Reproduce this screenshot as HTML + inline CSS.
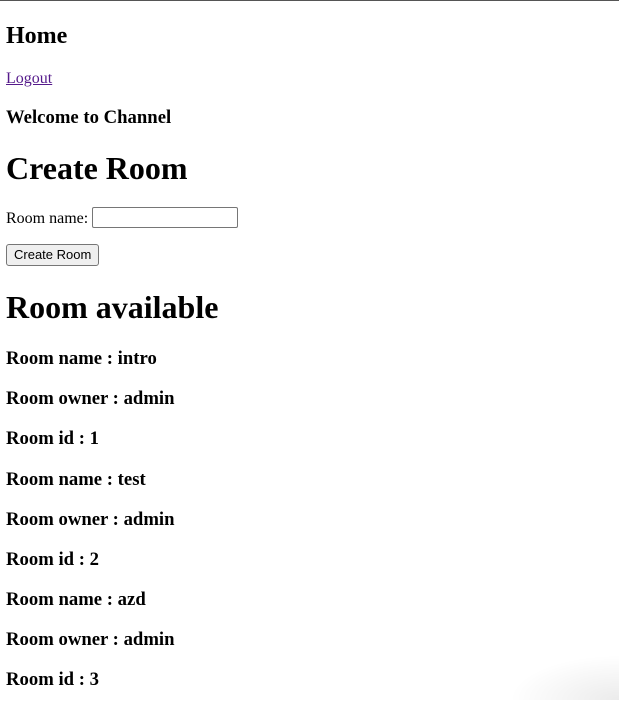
<!DOCTYPE html>
<html>
<head>
<meta charset="utf-8">
<style>
html,body{margin:0;padding:0;background:#fff;}
body{font-family:"Liberation Serif",serif;font-size:16px;color:#000;margin:0 6px 8px 6px;padding-top:2px;overflow:hidden;height:698px;position:relative;}
.topline{position:fixed;left:0;top:0;width:619px;height:1px;background:#555;}
h1{font-size:32px;margin:21.44px 0;line-height:37.5px;}
h2{font-size:24px;margin:19.92px 0;line-height:28px;}
h3{font-size:18.72px;margin:18.72px 0;line-height:21.4px;}
p{margin:16px 0;line-height:18.5px;}
a{color:#551a8b;}
input{font-family:"Liberation Sans",sans-serif;font-size:13px;width:140px;height:17px;border:1px solid #767676;border-radius:2px;padding:1px 2px;vertical-align:middle;margin:0;box-sizing:content-box;position:relative;top:-2px;}
button{font-family:"Liberation Sans",sans-serif;font-size:13px;height:22px;padding:0 7px;background:#efefef;border:1px solid #767676;border-radius:3px;margin:0;position:relative;top:-2px;}
.shadow{position:fixed;right:0;bottom:0;width:110px;height:45px;background:radial-gradient(ellipse at 100% 100%,rgba(0,0,0,0.08),rgba(0,0,0,0) 70%);}
</style>
</head>
<body>
<div class="topline"></div>
<h2>Home</h2>
<p><a href="#">Logout</a></p>
<h3>Welcome to Channel</h3>
<h1>Create Room</h1>
<p>Room name: <input type="text"></p>
<p><button>Create Room</button></p>
<h1>Room available</h1>
<h3>Room name : intro</h3>
<h3>Room owner : admin</h3>
<h3>Room id : 1</h3>
<h3>Room name : test</h3>
<h3>Room owner : admin</h3>
<h3>Room id : 2</h3>
<h3>Room name : azd</h3>
<h3>Room owner : admin</h3>
<h3>Room id : 3</h3>
<div class="shadow"></div>
</body>
</html>
